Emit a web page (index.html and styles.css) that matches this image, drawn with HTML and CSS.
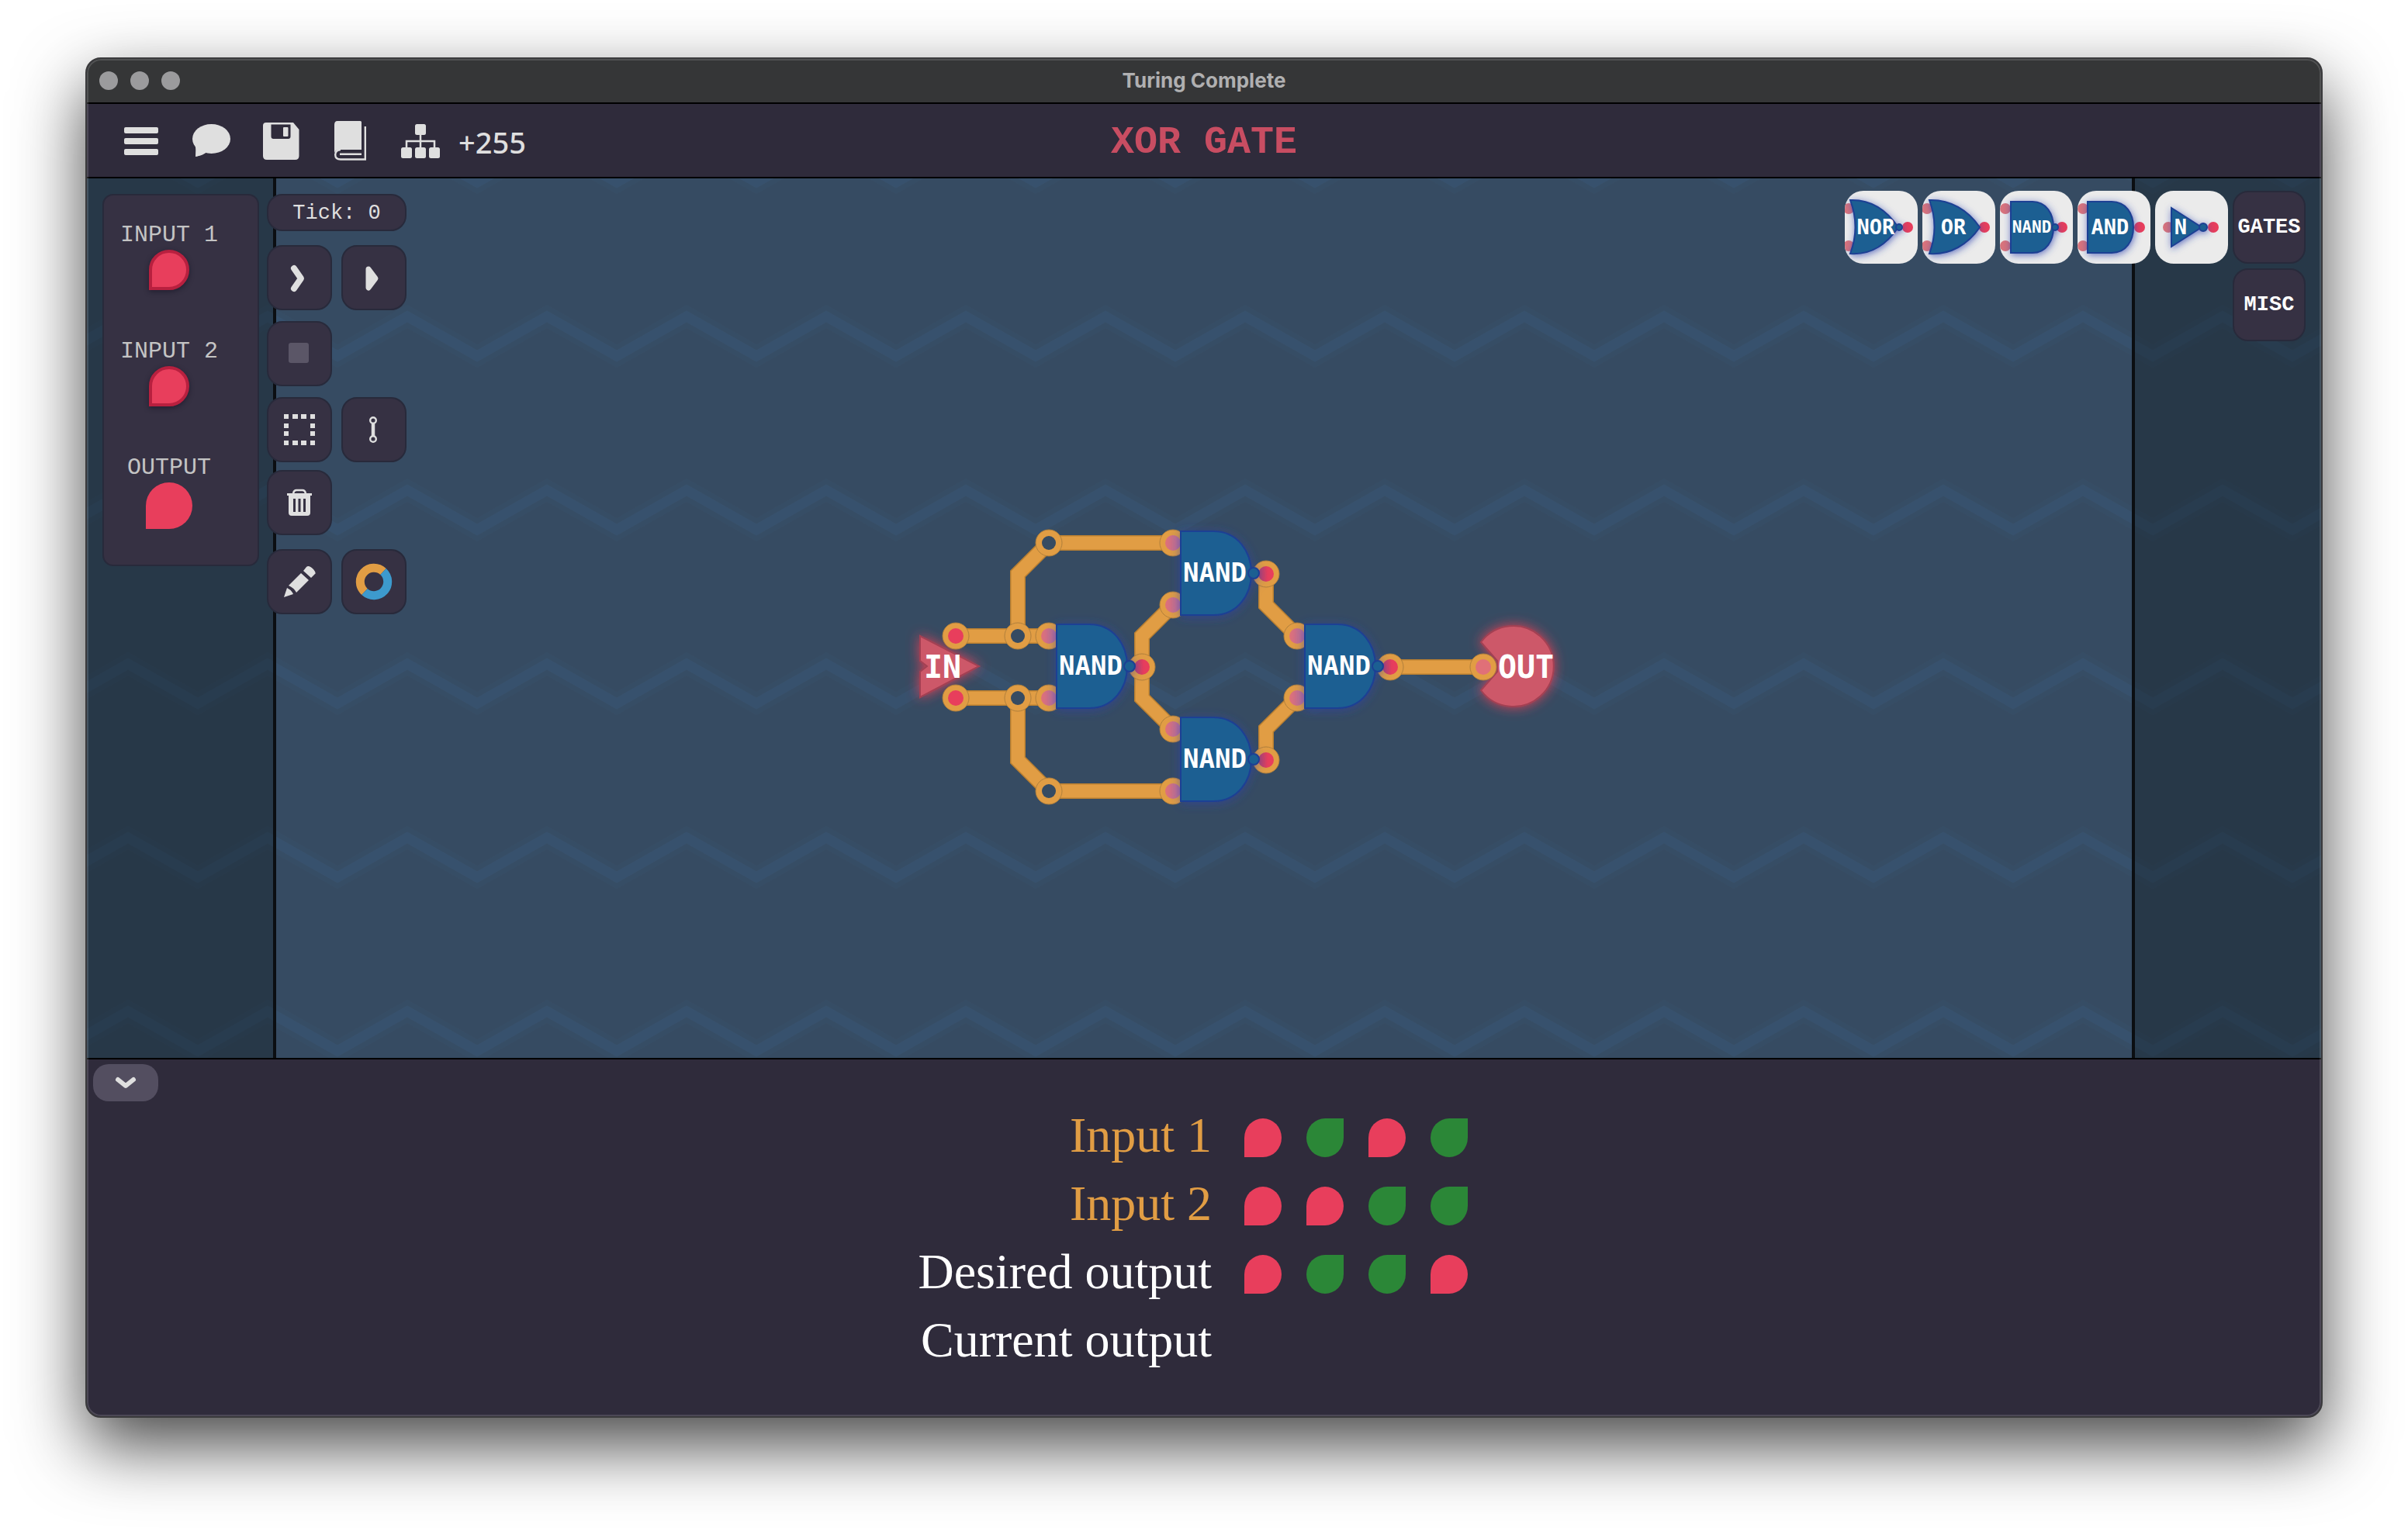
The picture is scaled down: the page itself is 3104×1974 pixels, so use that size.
FILE: index.html
```html
<!DOCTYPE html>
<html lang="en">
<head>
<meta charset="utf-8">
<title>Turing Complete</title>
<link rel="stylesheet" href="styles.css">
</head>
<body>
<div class="window">
  <div class="titlebar">
    <div class="lights"><span></span><span></span><span></span></div>
    <div class="window-title">Turing Complete</div>
  </div>

  <header class="header">
    <nav class="menu">
      <button class="menu-btn" type="button" aria-label="Menu">
        <svg viewBox="0 0 52 52"><rect x="4" y="9" width="44" height="8" rx="2"/><rect x="4" y="23" width="44" height="8" rx="2"/><rect x="4" y="37" width="44" height="8" rx="2"/></svg>
      </button>
      <button class="menu-btn" type="button" aria-label="Chat">
        <svg viewBox="0 0 52 52"><ellipse cx="26.500" cy="24" rx="24.500" ry="19"/><path d="M5 31C7 36 6 41 6 47C12 46 17 44 21 41Z"/></svg>
      </button>
      <button class="menu-btn" type="button" aria-label="Save">
        <svg viewBox="0 0 52 52"><path fill-rule="evenodd" d="M7 3H42L49.500 12V46Q49.500 51 44.500 51H8Q3 51 3 46V7Q3 3 7 3ZM13.500 5.500V21Q13.500 24 16.500 24H35.500Q38.500 24 38.500 21V5.500Z"/><rect x="29" y="9" width="6.500" height="12" rx="1"/></svg>
      </button>
      <button class="menu-btn" type="button" aria-label="Manual">
        <svg viewBox="0 0 52 52"><path d="M9 1H38.500Q40 1 40 2.500V38H11Q6.500 38 5 42V6Q5 1 9 1Z"/><path d="M44.800 8V50.500H13Q6.200 50.500 6.200 44.500Q6.200 38.500 13 38" fill="none" stroke="currentColor" stroke-width="2.400"/><path d="M12 43.800H40" stroke="currentColor" stroke-width="2.400"/></svg>
      </button>
      <button class="menu-btn" type="button" aria-label="Component tree">
        <svg viewBox="0 0 52 52"><rect x="19" y="5" width="14" height="14" rx="2.500"/><rect x="1" y="35" width="14" height="14" rx="2.500"/><rect x="19" y="35" width="14" height="14" rx="2.500"/><rect x="37" y="35" width="14" height="14" rx="2.500"/><path d="M26 18V36M8 36V27H44V36" fill="none" stroke="currentColor" stroke-width="2.500"/></svg>
      </button>
      <span class="score">+255</span>
    </nav>
    <h1 class="level">XOR GATE</h1>
  </header>

  <main class="stage">
    <svg class="canvas" aria-label="Circuit">
      <defs>
        <pattern id="zigzag" x="53" y="0" width="180" height="224" patternUnits="userSpaceOnUse">
          <g fill="none" stroke-linejoin="miter">
            <path d="M-90 14L-90 5L0 -46L90 5L180 -46L270 5" stroke="#35506a" stroke-opacity=".35" stroke-width="26"/>
            <path d="M-90 229L0 178L90 229L180 178L270 229" stroke="#35506a" stroke-opacity=".35" stroke-width="26"/>
            <path d="M-90 5L0 -46L90 5L180 -46L270 5" stroke="#37516d" stroke-width="13"/>
            <path d="M-90 229L0 178L90 229L180 178L270 229" stroke="#37516d" stroke-width="13"/>
          </g>
        </pattern>
        <filter id="glow-blue" x="-40%" y="-40%" width="180%" height="180%"><feDropShadow dx="0" dy="2" stdDeviation="7" flood-color="#2b3fae" flood-opacity=".6"/></filter>
        <filter id="glow-red" x="-40%" y="-40%" width="180%" height="180%"><feDropShadow dx="0" dy="0" stdDeviation="8" flood-color="#ff3e55" flood-opacity=".8"/></filter>
        <filter id="glow-tile" x="-40%" y="-40%" width="180%" height="180%"><feDropShadow dx="1" dy="2" stdDeviation="5" flood-color="#2b3fae" flood-opacity=".7"/></filter>
        <linearGradient id="in-core"><stop offset="0" stop-color="#e07078"/><stop offset="1" stop-color="#b9709a"/></linearGradient>
        <linearGradient id="out-core"><stop offset="0" stop-color="#ad4270"/><stop offset=".6" stop-color="#e83e5c"/></linearGradient>
        <g id="junction"><circle r="17" class="ring"/><circle r="9" fill="#364b62"/></g>
        <g id="source"><circle r="17" class="ring"/><circle r="10" fill="#e83e5c"/></g>
        <g id="sink"><circle r="17" class="ring"/><circle r="10" fill="url(#in-core)"/></g>
        <g id="nand">
          <use href="#sink" y="-40"/><use href="#sink" y="40"/>
          <circle cx="120" r="17" class="ring"/><circle cx="120" r="10" fill="url(#out-core)"/>
          <g filter="url(#glow-blue)">
            <path class="gate" d="M10 -55H52C84 -55 101 -28 101 -1S84 53 52 53H10Z"/>
            <circle class="gate" cx="104" cy="-1" r="7"/>
          </g>
          <text class="gate-name" x="54" y="10">NAND</text>
        </g>
      </defs>
      <svg x="50%" overflow="visible">
        <rect x="-6000" width="12000" height="6000" fill="#364b62"/>
        <rect x="-6000" width="12000" height="6000" fill="url(#zigzag)"/>
        <g fill="#111920" fill-opacity=".38"><rect x="-6000" width="4800" height="6000"/><rect x="1200" width="4800" height="6000"/></g>
        <g fill="#0b0e12"><rect x="-1200" width="4" height="6000"/><rect x="1196" width="4" height="6000"/></g>

        <path class="terminal" filter="url(#glow-red)" d="M-366 590L-290 629L-366 669V636L-357 629L-366 622Z"/>
        <g class="wire-edge"><path d="M-320 590H-200M-320 670H-200M240 630H360"/><path d="M-240 590V510L-200 470H-40M-240 670V750L-200 790H-40"/><path d="M-40 550L-80 590V670L-40 710M80 510V550L120 590M80 750V710L120 670"/></g>
        <g class="wire"><path d="M-320 590H-200M-320 670H-200M240 630H360"/><path d="M-240 590V510L-200 470H-40M-240 670V750L-200 790H-40"/><path d="M-40 550L-80 590V670L-40 710M80 510V550L120 590M80 750V710L120 670"/></g>
        <path class="terminal" filter="url(#glow-red)" d="M357 598A52 52 0 1 1 357 660L378 636V622Z"/>
        <use href="#source" x="-320" y="590"/><use href="#source" x="-320" y="670"/>
        <use href="#junction" x="-240" y="590"/><use href="#junction" x="-240" y="670"/>
        <use href="#junction" x="-200" y="470"/><use href="#junction" x="-200" y="790"/>
        <circle class="ring" cx="360" cy="630" r="17"/><circle cx="360" cy="630" r="10" fill="#e07078"/>
        <use href="#nand" x="-200" y="630"/>
        <use href="#nand" x="-40" y="510"/>
        <use href="#nand" x="-40" y="750"/>
        <use href="#nand" x="120" y="630"/>
        <text class="terminal-name" x="-337" y="644">IN</text>
        <text class="terminal-name" x="415" y="644">OUT</text>
      </svg>
    </svg>

    <div class="hud">
      <div class="left-tools">
        <section class="panel probes">
          <div class="probe"><label for="in1">INPUT 1</label><button id="in1" class="leaf leaf-input" type="button"></button></div>
          <div class="probe"><label for="in2">INPUT 2</label><button id="in2" class="leaf leaf-input" type="button"></button></div>
          <div class="probe"><span>OUTPUT</span><span class="leaf leaf-output"></span></div>
        </section>
        <div class="toolbar">
          <div class="panel tick">Tick: 0</div>
          <div class="tool-group">
            <div class="tool-row">
              <button class="panel tool" type="button" aria-label="Step"><svg viewBox="0 0 44 44"><path d="M15 10L24 23L15 36" fill="none" stroke="currentColor" stroke-width="8" stroke-linecap="round" stroke-linejoin="round"/></svg></button>
              <button class="panel tool" type="button" aria-label="Run"><svg viewBox="0 0 44 44"><path d="M15 11L24 23L15 35Z" stroke="currentColor" stroke-width="7" stroke-linejoin="round"/></svg></button>
            </div>
            <button class="panel tool" type="button" aria-label="Stop" disabled><svg viewBox="0 0 44 44"><rect x="8" y="8" width="26" height="26" rx="3"/></svg></button>
          </div>
          <div class="tool-group edit">
            <div class="tool-row">
              <button class="panel tool" type="button" aria-label="Select area"><svg viewBox="0 0 44 44"><path d="M2 2h6v6h-6zM13 2h7v6h-7zM24 2h7v6h-7zM36 2h6v6h-6zM2 36h6v6h-6zM13 36h7v6h-7zM24 36h7v6h-7zM36 36h6v6h-6zM2 14h6v6h-6zM2 24h6v6h-6zM36 14h6v6h-6zM36 24h6v6h-6z"/></svg></button>
              <button class="panel tool" type="button" aria-label="Wire"><svg viewBox="0 0 44 44"><g fill="none" stroke="currentColor"><circle cx="21" cy="10" r="3.800" stroke-width="2.400"/><circle cx="21" cy="34" r="3.800" stroke-width="2.400"/><path d="M21 14V30" stroke-width="4.500"/></g></svg></button>
            </div>
            <button class="panel tool" type="button" aria-label="Delete"><svg viewBox="0 0 44 44"><path d="M14 10Q15 6 18 6H26Q29 6 30 10" fill="none" stroke="currentColor" stroke-width="2.500"/><path fill-rule="evenodd" d="M6 10H38V13H36V35Q36 39 32 39H12Q8 39 8 35V13H6ZM14 17V34H17V17ZM20.500 17V34H23.500V17ZM27 17V34H30V17Z"/></svg></button>
          </div>
          <div class="tool-row paint">
            <button class="panel tool" type="button" aria-label="Edit"><svg viewBox="0 0 44 44"><path d="M2 42L6 30Q12 33 14 38ZM8 27L24 11L34 20L18 36Q15 30 8 27ZM27 8L31 3Q34 0 40 6Q44 11 42 12L37 17Z"/></svg></button>
            <button class="panel tool" type="button" aria-label="Wire colour"><svg viewBox="0 0 44 44" overflow="visible"><g fill="none" stroke-width="11"><path d="M34 9A17.500 17.500 0 0 0 10 35" stroke="#e19d44"/><path d="M34 9A17.500 17.500 0 1 1 10 35" stroke="#3d9acd"/></g></svg></button>
          </div>
        </div>
      </div>

      <nav class="palette">
        <div class="palette-row">
          <button class="tile" type="button"><svg viewBox="0 0 94 94"><circle class="pin-in" cx="5" cy="23" r="7"/><circle class="pin-in" cx="5" cy="71" r="7"/><circle class="pin-out" cx="81" cy="47" r="7"/><g filter="url(#glow-tile)"><path class="gate" d="M7 12C33 11 54 25 69 47C54 69 33 83 7 81Q20 47 7 12Z"/><circle class="gate" cx="70" cy="47" r="4"/></g><text class="tile-name" x="40" y="56">NOR</text></svg></button>
          <button class="tile" type="button"><svg viewBox="0 0 94 94"><circle class="pin-in" cx="6" cy="23" r="7"/><circle class="pin-in" cx="6" cy="71" r="7"/><circle class="pin-out" cx="80" cy="47" r="7"/><g filter="url(#glow-tile)"><path class="gate" d="M9 12C36 11 59 25 74 47C59 69 36 83 9 81Q22 47 9 12Z"/></g><text class="tile-name" x="40" y="56">OR</text></svg></button>
          <button class="tile" type="button"><svg viewBox="0 0 94 94"><circle class="pin-in" cx="7" cy="23" r="7"/><circle class="pin-in" cx="7" cy="71" r="7"/><circle class="pin-out" cx="80" cy="47" r="7"/><g filter="url(#glow-tile)"><path class="gate" d="M14 14H42C60 14 69 30 69 47S60 80 42 80H14Z"/><circle class="gate" cx="71" cy="47" r="4"/></g><text class="tile-name tile-name-long" x="41" y="54">NAND</text></svg></button>
          <button class="tile" type="button"><svg viewBox="0 0 94 94"><circle class="pin-in" cx="7" cy="23" r="7"/><circle class="pin-in" cx="7" cy="71" r="7"/><circle class="pin-out" cx="80" cy="47" r="7"/><g filter="url(#glow-tile)"><path class="gate" d="M13 14H44C63 14 72 30 72 47S63 80 44 80H13Z"/></g><text class="tile-name" x="42" y="56">AND</text></svg></button>
          <button class="tile" type="button"><svg viewBox="0 0 94 94"><circle class="pin-in" cx="17" cy="47" r="7"/><circle class="pin-out" cx="75" cy="47" r="7"/><g filter="url(#glow-tile)"><path class="gate" d="M21 22L60 47L21 72Z"/><circle class="gate" cx="62" cy="47" r="5"/></g><text class="tile-name" x="33" y="56">N</text></svg></button>
          <button class="panel category" type="button">GATES</button>
        </div>
        <button class="panel category" type="button">MISC</button>
      </nav>
    </div>
  </main>

  <section class="results">
    <button class="collapse" type="button" aria-label="Collapse"><svg viewBox="0 0 36 24"><path d="M8 8L18 16L28 8" fill="none" stroke="currentColor" stroke-width="6" stroke-linecap="round" stroke-linejoin="round"/></svg></button>
    <table class="truth">
      <colgroup><col class="col-label"><col class="col-bit"><col class="col-bit"><col class="col-bit"><col class="col-bit"><col></colgroup>
      <tbody>
        <tr class="given"><th scope="row">Input 1</th><td><i class="leaf off"></i></td><td><i class="leaf on"></i></td><td><i class="leaf off"></i></td><td><i class="leaf on"></i></td><td></td></tr>
        <tr class="given"><th scope="row">Input 2</th><td><i class="leaf off"></i></td><td><i class="leaf off"></i></td><td><i class="leaf on"></i></td><td><i class="leaf on"></i></td><td></td></tr>
        <tr><th scope="row">Desired output</th><td><i class="leaf off"></i></td><td><i class="leaf on"></i></td><td><i class="leaf on"></i></td><td><i class="leaf off"></i></td><td></td></tr>
        <tr><th scope="row">Current output</th><td></td><td></td><td></td><td></td><td></td></tr>
      </tbody>
    </table>
  </section>
</div>
</body>
</html>
```
FILE: styles.css
```css
:root {
  --bar: #2f2b3b;
  --panel: #363143;
  --ink: #dfdfdf;
  --red: #e83e5c;
  --green: #2b8737;
  --orange: #e19d44;
  --mono: "Liberation Mono", "Courier New", monospace;
}

* { box-sizing: border-box; }

body {
  margin: 0;
  min-height: 100vh;
  padding: 74px 110px 146px;
  display: flex;
  flex-direction: column;
  background: #fff;
  color: var(--ink);
  font-family: "Noto Sans", sans-serif;
}

button {
  margin: 0;
  padding: 0;
  border: 0;
  background: none;
  color: inherit;
  font: inherit;
}

svg { display: block; fill: currentColor; }

/* Window frame */
.window {
  position: relative;
  flex: 1;
  display: flex;
  flex-direction: column;
  overflow: hidden;
  border: 2px solid #3a3a3c;
  border-radius: 20px;
  background: var(--bar);
  box-shadow: 0 36px 88px rgba(0, 0, 0, .72);
}

.window::after {
  content: "";
  position: absolute;
  inset: 0;
  border-radius: 18px;
  box-shadow: inset 0 0 0 2px rgba(255, 255, 255, .14);
  pointer-events: none;
}

.titlebar {
  display: grid;
  grid-template-columns: 1fr auto 1fr;
  align-items: center;
  height: 58px;
  padding: 0 16px;
  border-bottom: 2px solid #000;
  background: #353637;
}

.lights { display: flex; gap: 16px; }

.lights span {
  width: 24px;
  height: 24px;
  border-radius: 50%;
  background: #9b9b9d;
}

.window-title {
  color: #b0b0b1;
  font: 700 26px/32px Inter, sans-serif;
}

/* Top bar */
.header {
  display: grid;
  grid-template-columns: 1fr auto 1fr;
  align-items: center;
  height: 96px;
  padding: 0 25px;
  border-bottom: 2px solid #000;
}

.menu { display: flex; align-items: center; }

.menu-btn {
  display: grid;
  place-items: center;
  width: 90px;
  height: 90px;
}

.menu-btn svg { width: 52px; height: 52px; }

.score {
  padding: 4px 0 0 4px;
  font-size: 38px;
  font-weight: 500;
  line-height: 48px;
}

.level {
  margin: 0;
  padding-top: 6px;
  color: #c84d62;
  font: bold 50px/60px var(--mono);
}

/* Playfield */
.stage {
  position: relative;
  flex: 1;
  min-height: 600px;
}

.canvas {
  position: absolute;
  inset: 0;
  width: 100%;
  height: 100%;
}

.ring { fill: var(--orange); stroke: #b0803c; stroke-width: 1; }
.gate { fill: #1d5e92; stroke: #1c3f94; stroke-width: 2; }
.terminal { fill: #cd5869; stroke: #a24153; stroke-width: 2; }
.wire-edge { fill: none; stroke: #b97f31; stroke-width: 20; }
.wire { fill: none; stroke: var(--orange); stroke-width: 17; }

.gate-name,
.terminal-name,
.tile-name {
  fill: #fff;
  font-family: "DejaVu Sans Mono", monospace;
  font-weight: bold;
  text-anchor: middle;
}

.gate-name { font-size: 34px; }
.terminal-name { font-size: 40px; }
.tile-name { font-size: 27px; }
.tile-name-long { font-size: 21px; }

.hud {
  position: relative;
  display: flex;
  justify-content: space-between;
  align-items: flex-start;
  padding: 16px 20px;
}

.left-tools {
  display: flex;
  align-items: flex-start;
  gap: 10px;
  padding-top: 4px;
}

.panel {
  border: 2px solid #282a3b;
  border-radius: 20px;
  background: var(--panel);
  font-family: var(--mono);
}

.probes {
  display: flex;
  flex-direction: column;
  gap: 60px;
  width: 202px;
  padding: 32px 30px 46px 0;
  border-radius: 14px;
  color: #c4c4c4;
  font-size: 30px;
  line-height: 38px;
}

.probe {
  display: flex;
  flex-direction: column;
  align-items: center;
}

.leaf {
  display: block;
  border-radius: 50% 50% 50% 0;
  background: var(--red);
}

.leaf-input {
  width: 52px;
  height: 52px;
  border: 4px solid #b8203f;
  box-shadow: 0 2px 6px rgba(20, 18, 35, .6);
}

.leaf-output { width: 60px; height: 60px; }

.toolbar { display: flex; flex-direction: column; }

.tick {
  width: 180px;
  height: 48px;
  margin-bottom: 18px;
  font-size: 27px;
  line-height: 46px;
  text-align: center;
}

.tool-group {
  display: flex;
  flex-direction: column;
  gap: 14px;
}

.tool-group.edit { gap: 10px; margin-top: 14px; }
.tool-row { display: flex; gap: 12px; }
.paint { margin-top: 18px; }

.tool {
  display: grid;
  place-items: center;
  width: 84px;
  height: 84px;
}

.tool svg { width: 44px; height: 44px; }
.tool:disabled { color: #5b5667; }

/* Component palette */
.palette {
  display: flex;
  flex-direction: column;
  align-items: flex-end;
  gap: 6px;
}

.palette-row { display: flex; gap: 6px; }

.tile,
.category {
  width: 94px;
  height: 94px;
}

.tile {
  overflow: hidden;
  border-radius: 24px;
  background: #ebebeb;
}

.pin-in { fill: #d8737c; }
.pin-out { fill: var(--red); }

.category {
  color: #fff;
  font-size: 27px;
  font-weight: bold;
}

/* Truth table */
.results {
  padding: 6px 8px 54px;
  border-top: 2px solid #000;
}

.collapse {
  display: grid;
  place-items: center;
  width: 84px;
  height: 48px;
  border-radius: 20px;
  background: #534e60;
}

.collapse svg { width: 36px; height: 24px; }

.truth {
  width: calc(100% - 72px);
  margin-left: 72px;
  table-layout: fixed;
  border-collapse: collapse;
  color: #fff;
}

.col-label { width: 50%; }
.col-bit { width: 80px; }

.truth th {
  padding: 0 26px 0 0;
  font: 400 64px/88px "Roboto Slab", "Liberation Serif", serif;
  text-align: right;
}

.truth td { padding: 6px 0 0; }
.given { color: var(--orange); }

.truth .leaf {
  width: 48px;
  height: 50px;
  margin: 0 auto;
}

.truth .on {
  border-radius: 50% 0 50% 50%;
  background: var(--green);
}
```
